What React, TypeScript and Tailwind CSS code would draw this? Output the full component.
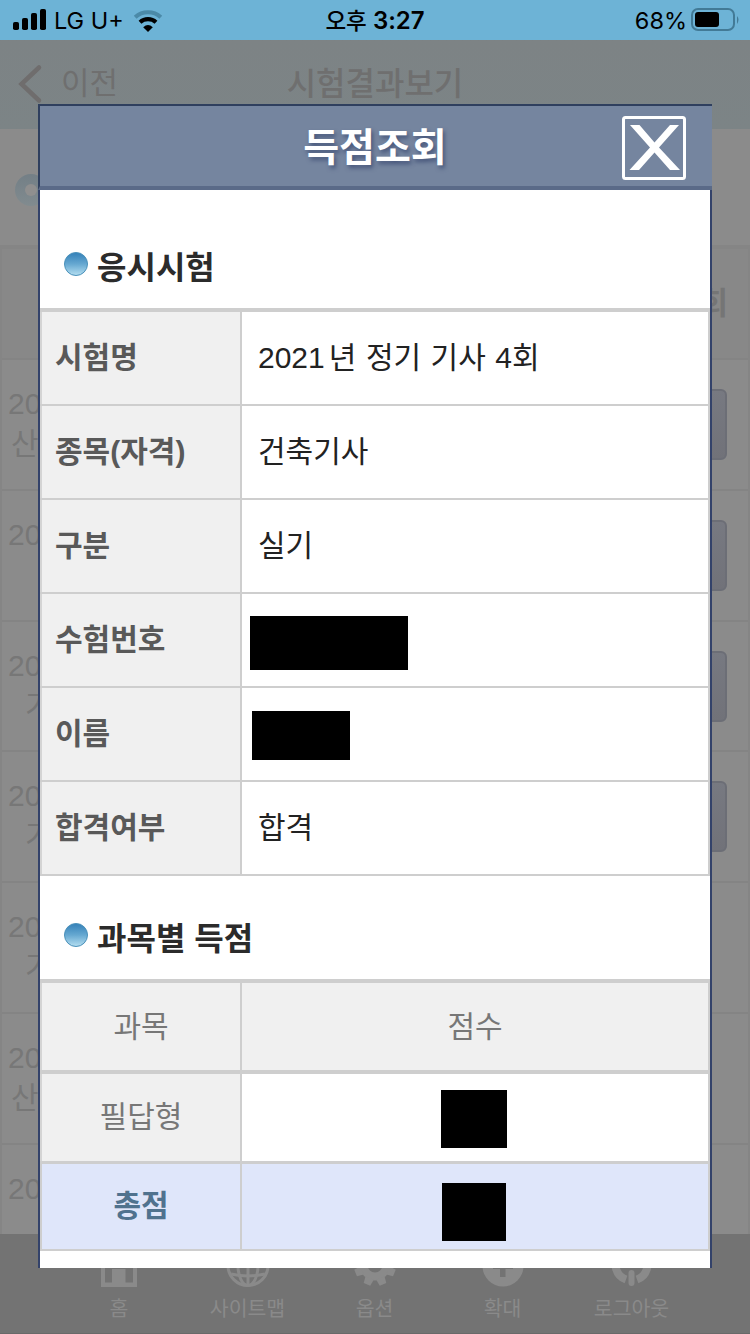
import React from "react";

const SANS = "font-['Liberation_Sans','Noto_Sans_CJK_KR',sans-serif]";
const STATUS = "font-['Inter','Noto_Sans_CJK_KR',sans-serif]";

function StatusBar() {
  return (
    <div className={`relative flex h-10 shrink-0 items-center bg-[#6db3d6] text-black ${STATUS}`}>
      <svg className="ml-3 shrink-0" width="36" height="24" viewBox="0 0 36 24">
        <rect x="1" y="14" width="6" height="8" rx="1.8" />
        <rect x="10" y="10" width="6" height="12" rx="1.8" />
        <rect x="19" y="5" width="6" height="17" rx="1.8" />
        <rect x="28" y="1" width="6" height="21" rx="1.8" />
      </svg>
      <span className="ml-[6px] w-[78px] whitespace-nowrap pt-[2px] text-[23.5px] leading-[38px]">LG U+</span>
      <svg className="mt-[1px] shrink-0" width="32" height="24" viewBox="0 0 32 24">
        <path d="M3.2 8.2C10.5 1.6 21.500 1.6 28.800 8.200" fill="none" stroke="#4b8aa8" strokeWidth="4.200" />
        <path d="M8 13.200C12.500 9.200 19.500 9.200 24 13.200" fill="none" stroke="#000" strokeWidth="4.200" />
        <path d="M11.200 18.200Q16 14 20.800 18.200L16 23Z" />
      </svg>
      <div className="absolute inset-x-0 top-[1px] text-center text-[24px] font-semibold leading-10">
        <span className="text-[22.5px] font-medium">오후</span> 3:27
      </div>
      <span className="ml-auto pt-[2px] text-[23.5px] leading-[38px]">68%</span>
      <svg className="ml-[4px] mr-[10px] shrink-0" width="49" height="24" viewBox="0 0 49 24">
        <rect x="1" y="1" width="42" height="21" rx="6" fill="none" stroke="#427a96" strokeWidth="2" />
        <rect x="4" y="4" width="24" height="15" rx="3" />
        <path d="M46 8q3 3.500 0 8z" fill="#427a96" />
      </svg>
    </div>
  );
}

const rows = ["산", "", "기", "기", "기", "산"];

function ResultsPage() {
  return (
    <div className="flex h-[1194px] flex-col overflow-hidden bg-[#8b8b8b]">
      <header className="relative flex h-[89px] shrink-0 items-center bg-gradient-to-b from-[#7d8385] to-[#7c8486] text-[#6f6f6f]">
        <svg className="-mt-[2px] ml-[17px]" width="26" height="40" viewBox="0 0 26 40">
          <path d="M22 3.500L4.500 20L22 36.500" fill="none" stroke="#6f6d6d" strokeWidth="4.500" strokeLinecap="round" />
        </svg>
        <span className="-mt-[2px] ml-[18px] text-[31px] leading-[40px]">이전</span>
        <h1 className="absolute inset-x-0 top-[24px] text-center text-[32px] font-medium leading-[40px]">시험결과보기</h1>
      </header>
      <div className="h-[116px] shrink-0 pl-[15px] pt-[45px]">
        <div className="h-8 w-8 rounded-full bg-gradient-to-b from-[#737f86] to-[#818b8f] p-[10px]">
          <div className="h-3 w-3 rounded-full bg-[#8f8f8f]" />
        </div>
      </div>
      <div className="flex shrink-0 flex-col border-x-2 border-t-4 border-[#858585]">
        <div className="flex h-[111px] items-center justify-end border-b-2 border-[#848484] bg-[#888888] pr-[20px] text-[31px] font-bold leading-none text-[#757575]">회</div>
        {rows.map((second, i) => (
          <div key={i} className="flex h-[130.800px] shrink-0 justify-between border-b-2 border-[#848484]">
            <div className="w-[70px] pl-[6px] pt-[24px] text-[30px] leading-[40px] text-[#777777]">
              <div>20</div>
              <div className={second === "기" ? "pl-[17px]" : "pl-[3px]"}>{second}</div>
            </div>
            {i < 4 && <div className="mr-[21px] mt-[29px] h-[71px] w-[90px] rounded-md border-2 border-[#6c6e76] bg-gradient-to-b from-[#777981] to-[#717279]" />}
          </div>
        ))}
        <div className="h-[100px] pl-[6px] pt-[24px] text-[30px] leading-[40px] text-[#777777]">20</div>
      </div>
    </div>
  );
}

function Tab({ label, width, children }: { label: string; width: string; children: React.ReactNode }) {
  return (
    <div className={`flex flex-col items-center ${width}`}>
      <svg width="44" height="44" viewBox="0 0 44 44" fill="#8a8a8a">{children}</svg>
      <span className="mt-[6px] text-[20.500px] leading-[30px]">{label}</span>
    </div>
  );
}

function TabBar() {
  return (
    <nav className="flex h-[100px] shrink-0 border-b border-[#696969] bg-[#737373] pl-[55px] pt-[10px] text-[#8a8a8a]">
      <Tab label="홈" width="w-[128px]">
        <path d="M4 16L22 2L40 16V43H4ZM8 22V38.500H15V25H28.500V38.500H36V22Z" fillRule="evenodd" />
      </Tab>
      <Tab label="사이트맵" width="w-[129px]">
        <g fill="none" stroke="#8a8a8a" strokeWidth="3">
          <circle cx="22" cy="21.500" r="20" />
          <ellipse cx="22" cy="21.500" rx="10" ry="20" />
          <path d="M22 2V41M2 21.500H42M5 30Q22 34 39 30M5 13Q22 9 39 13" />
        </g>
      </Tab>
      <Tab label="옵션" width="w-[125px]">
        <circle cx="22" cy="21" r="11.500" fill="none" stroke="#8a8a8a" strokeWidth="8" />
        {[22.500, 67.500, 112.500, 157.500, 202.500, 247.500, 292.500, 337.500].map((angle) => (
          <path key={angle} d="M17.500 7L18.500 0H25.500L26.500 7Z" transform={`rotate(${angle} 22 21)`} />
        ))}
      </Tab>
      <Tab label="확대" width="w-[131px]">
        <path fillRule="evenodd" d="M22 1.500a20.500 20.500 0 1 0 0 41a20.500 20.500 0 1 0 0-41ZM19 11H24.500V19.500H32V25H24.500V33H19V25H12V19.500H19Z" />
      </Tab>
      <Tab label="로그아웃" width="w-[127px]">
        <path d="M16 35.500A16 16 0 1 1 27 35.500" fill="none" stroke="#8a8a8a" strokeWidth="8" />
        <rect x="18.500" y="26" width="6" height="16" rx="3" />
      </Tab>
    </nav>
  );
}

function SectionTitle({ children, className }: { children: React.ReactNode; className: string }) {
  return (
    <div className={`flex shrink-0 pl-6 text-[#2b2b2b] ${className}`}>
      <svg width="24" height="24" viewBox="0 0 24 24" className="shrink-0">
        <defs>
          <linearGradient id="ball" x1="0" y1="0" x2="0" y2="1">
            <stop offset="0" stopColor="#3380b8" />
            <stop offset="0.500" stopColor="#66a8d1" />
            <stop offset="1" stopColor="#b5dff1" />
          </linearGradient>
        </defs>
        <circle cx="12" cy="12" r="11.500" fill="url(#ball)" stroke="#4b91ba" />
      </svg>
      <h3 className="-mt-[7px] ml-[9px] text-[32px] font-bold leading-[46px]">{children}</h3>
    </div>
  );
}

const info: { label: string; value: React.ReactNode }[] = [
  { label: "시험명", value: <span><span className="mr-[4px]">2021</span>년 정기 기사 4회</span> },
  { label: "종목(자격)", value: "건축기사" },
  { label: "구분", value: "실기" },
  { label: "수험번호", value: <div className="-ml-[8px] mt-[8px] h-[54px] w-[158px] bg-black" /> },
  { label: "이름", value: <div className="-ml-[6px] mt-[5px] h-[49px] w-[98px] bg-black" /> },
  { label: "합격여부", value: "합격" },
];

function ScoreDialog() {
  return (
    <section className="absolute left-[38px] top-[104px] flex h-[1164px] w-[674px] flex-col bg-white">
      <header className="flex h-[86px] shrink-0 border-b-4 border-l-2 border-t-2 border-b-[#5a6a88] border-l-[#2f3f5e] border-t-[#2f3f5e] bg-[#75859f]">
        <h2 className="ml-[85px] w-[500px] pt-[2px] text-center text-[39px] font-bold leading-[80px] text-white [text-shadow:2px_3px_4px_#46557a]">득점조회</h2>
        <svg className="-ml-[3px] mt-[10px]" width="64" height="64" viewBox="0 0 64 64">
          <rect x="1.500" y="1.500" width="61" height="61" rx="2" fill="none" stroke="#fff" strokeWidth="3" />
          <path fill="#fff" d="M8 9H17.500L32.500 26.500L48 9H57L37 31.500L58 54H48L32.500 36.500L17 54H7.500L28 31.500Z" />
        </svg>
      </header>
      <div className="flex flex-1 flex-col border-x-2 border-[#33426a]">
        <SectionTitle className="h-[118px] pt-[62px]">응시시험</SectionTitle>
        <div className="shrink-0 border-t-4 border-[#cecece]">
          {info.map(({ label, value }) => (
            <div key={label} className="flex h-[94px] border-b-2 border-r-2 border-[#cecece] text-[30px]">
              <div className="flex w-[202px] items-center border-l-2 border-r-2 border-l-[#d4d4d4] border-r-[#cecece] bg-[#f0f0f0] pb-[2px] pl-[13px] font-bold text-[#595959]">{label}</div>
              <div className="flex items-center pb-[2px] pl-4 text-[#222] [word-spacing:1.2px]">{value}</div>
            </div>
          ))}
        </div>
        <SectionTitle className="h-[103px] pt-[47px]">과목별 득점</SectionTitle>
        <div className="shrink-0 border-t-4 border-[#cecece] text-[30px] text-[#777]">
          <div className="flex h-[91px] border-b-4 border-r-2 border-[#cecece] bg-[#f0f0f0]">
            <div className="flex w-[202px] items-center justify-center border-l-2 border-r-2 border-l-[#d4d4d4] border-r-[#cecece] pb-px">과목</div>
            <div className="flex flex-1 items-center justify-center pb-px">점수</div>
          </div>
          <div className="flex h-[90px] border-b-[3px] border-r-2 border-[#cecece]">
            <div className="flex w-[202px] items-center justify-center border-l-2 border-r-2 border-l-[#d4d4d4] border-r-[#cecece] bg-[#f0f0f0] pb-[2px]">필답형</div>
            <div className="flex flex-1 justify-center pr-[2px] pt-4"><div className="h-[58px] w-[66px] bg-black" /></div>
          </div>
          <div className="flex h-[87px] border-b-2 border-r-2 border-[#cecece] bg-[#dfe6fa]">
            <div className="flex w-[202px] items-center justify-center border-l-2 border-r-2 border-[#cecece] pb-[2px] font-bold text-[#50728e]">총점</div>
            <div className="flex flex-1 justify-center pr-[2px] pt-[19px]"><div className="h-[58px] w-[64px] bg-black" /></div>
          </div>
        </div>
      </div>
    </section>
  );
}

export default function App() {
  return (
    <main className={`relative flex h-[1334px] w-[750px] flex-col overflow-hidden ${SANS}`}>
      <StatusBar />
      <ResultsPage />
      <TabBar />
      <ScoreDialog />
    </main>
  );
}
